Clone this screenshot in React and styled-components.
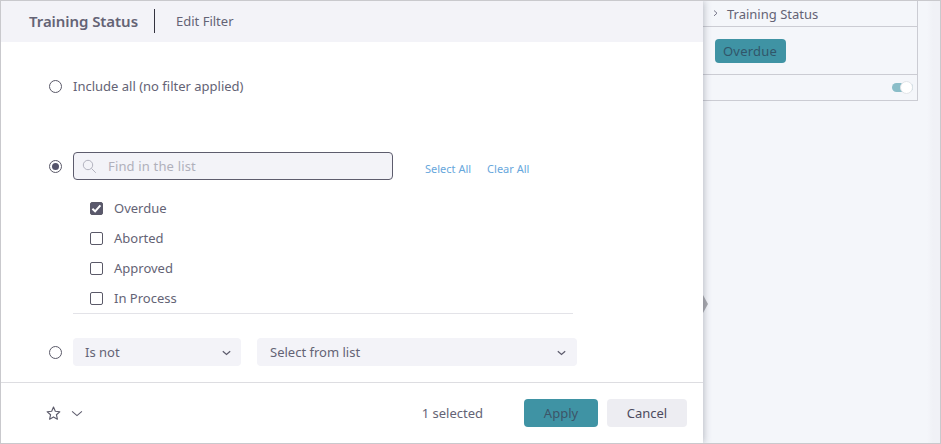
import React from "react";
import styled, { createGlobalStyle } from "styled-components";

const GlobalStyle = createGlobalStyle`
  * { box-sizing: border-box; }
  body { margin: 0; font-family: "Noto Sans", sans-serif; font-size: 13px; color: #646375; }
`;

const Frame = styled.div`
  display: flex;
  width: 941px;
  height: 444px;
  border: 1px solid #c9c9cd;
  overflow: hidden;
  background: #f4f6fa;
`;

const Panel = styled.section`
  position: relative;
  z-index: 1;
  display: flex;
  flex-direction: column;
  width: 702px;
  flex: none;
  background: #fff;
  box-shadow: 1px 0 7px rgba(70, 75, 95, 0.34);
`;

const Header = styled.header`
  display: flex;
  align-items: center;
  height: 41px;
  padding: 0 0 1px 28px;
  background: #f3f3f8;
`;

const Title = styled.h1`
  margin: 0;
  width: 125px;
  font-size: 15px;
  line-height: 20px;
  font-weight: 600;
  letter-spacing: -0.06px;
  white-space: nowrap;
`;

const Subtitle = styled.span`
  display: flex;
  align-items: center;
  height: 24px;
  padding-left: 21px;
  border-left: 1px solid #33323f;
`;

const Body = styled.div`
  flex: 1;
  padding: 34px 0 0 48px;
`;

const Row = styled.div`
  display: flex;
  align-items: center;
  height: ${(p) => p.$height}px;
  margin-top: ${(p) => p.$gap || 0}px;
`;

const Radio = styled.span`
  display: grid;
  place-items: center;
  flex: none;
  width: 13px;
  height: 13px;
  margin-right: 11px;
  border: 1px solid #5a5968;
  border-radius: 50%;
  &::after {
    content: "";
    width: 7px;
    height: 7px;
    border-radius: 50%;
    background: ${(p) => (p.$on ? "#55546a" : "transparent")};
  }
`;

const Search = styled.div`
  display: flex;
  align-items: center;
  gap: 11px;
  width: 320px;
  height: 28px;
  padding-left: 8px;
  border: 1px solid #5d5c6d;
  border-radius: 4px;
  background: #f3f3f8;
  color: #b0b0bb;
  letter-spacing: 0.16px;
`;

const Links = styled.div`
  display: flex;
  gap: 16px;
  margin: 5px 0 0 32px;
  color: #67a7dc;
  font-size: 11px;
  line-height: 16px;
`;

const Options = styled.ul`
  width: 500px;
  height: 121px;
  margin: 13px 0 0 24px;
  padding: 0;
  list-style: none;
  border-bottom: 1px solid #e3e3e8;
`;

const Option = styled.li`
  display: flex;
  align-items: center;
  gap: 11px;
  height: 30px;
  padding-left: 17px;
`;

const Checkbox = styled.span`
  display: grid;
  place-items: center;
  width: 13px;
  height: 13px;
  border: 1px solid #5a5968;
  border-radius: 2px;
  background: ${(p) => (p.$on ? "#5a596c" : "#fff")};
`;

const Select = styled.div`
  display: flex;
  align-items: center;
  justify-content: space-between;
  width: ${(p) => p.$width}px;
  height: 28px;
  margin-right: 16px;
  padding: 0 ${(p) => p.$end}px 0 ${(p) => p.$indent}px;
  border-radius: 4px;
  background: #f3f3f8;
`;

const Footer = styled.footer`
  display: flex;
  align-items: center;
  height: 61px;
  padding: 0 16px 0 45px;
  border-top: 1px solid #dddde1;
`;

const Favorite = styled.div`
  display: flex;
  align-items: center;
  gap: 10px;
`;

const Count = styled.span`
  margin-left: auto;
  margin-right: 41px;
`;

const Button = styled.button`
  width: ${(p) => p.$width}px;
  height: 28px;
  padding: 0;
  border: 0;
  border-radius: 4px;
  background: ${(p) => (p.$primary ? "#3f93a4" : "#ededf2")};
  color: ${(p) => (p.$primary ? "#3d5568" : "#4c4b5e")};
  font: inherit;
  & + & { margin-left: 9px; }
`;

const Sidebar = styled.aside`
  position: relative;
  flex: 1;
  padding-right: 22px;
  background: linear-gradient(to right, #f4f6fa 0 224px, #f0f1f6 230px);
`;

const FilterCard = styled.div`
  width: 215px;
  border-right: 1px solid #cbccd3;
  border-bottom: 1px solid #cbccd3;
`;

const FilterTitle = styled.div`
  display: flex;
  align-items: center;
  gap: 8px;
  height: 26px;
  padding-left: 9px;
  border-bottom: 1px solid #cbccd3;
`;

const FilterValue = styled.div`
  display: flex;
  align-items: center;
  height: 48px;
  padding-left: 12px;
  border-bottom: 1px solid #cbccd3;
`;

const Chip = styled.span`
  width: 71px;
  height: 24px;
  padding-right: 1px;
  border-radius: 4px;
  background: #3f93a4;
  color: #31566a;
  line-height: 24px;
  text-align: center;
  letter-spacing: 0.2px;
`;

const ToggleRow = styled.div`
  display: flex;
  align-items: center;
  justify-content: flex-end;
  height: 25px;
  padding-right: 4px;
`;

const Toggle = styled.span`
  display: flex;
  justify-content: flex-end;
  align-items: center;
  width: 21px;
  height: 9px;
  border-radius: 5px;
  background: #8abdc8;
  &::after {
    content: "";
    flex: none;
    width: 11px;
    height: 11px;
    border: 1px solid #e2e5e9;
    border-radius: 50%;
    background: #fff;
  }
`;

const Handle = styled.svg`
  position: absolute;
  left: 0;
  top: 293px;
`;

const Chevron = ({ width = 9, stroke = 1.4 }) => (
  <svg width={width} height={width} viewBox="0 0 10 10" fill="none" stroke="#5d5c6d" strokeWidth={stroke}>
    <path d="M.9 3.6 5 7.2 9.1 3.6" />
  </svg>
);

const options = ["Overdue", "Aborted", "Approved", "In Process"];

export default function App() {
  return (
    <>
      <GlobalStyle />
      <Frame>
        <Panel>
          <Header>
            <Title>Training Status</Title>
            <Subtitle>Edit Filter</Subtitle>
          </Header>
          <Body>
            <Row $height={20}>
              <Radio />
              Include all (no filter applied)
            </Row>
            <Row $height={28} $gap={56}>
              <Radio $on />
              <Search>
                <svg width="15" height="15" viewBox="0 0 15 15" fill="none" stroke="#b3b3bf">
                  <circle cx="6" cy="6" r="4.7" />
                  <path d="m9.4 9.4 4.4 4.4" />
                </svg>
                Find in the list
              </Search>
              <Links>
                <span>Select All</span>
                <span>Clear All</span>
              </Links>
            </Row>
            <Options>
              {options.map((name, i) => (
                <Option key={name}>
                  <Checkbox $on={i === 0}>
                    {i === 0 && (
                      <svg width="11" height="11" viewBox="0 0 11 11" fill="none" stroke="#fff" strokeWidth="2">
                        <path d="m1.4 5.8 2.7 2.5 5.3-6" />
                      </svg>
                    )}
                  </Checkbox>
                  {name}
                </Option>
              ))}
            </Options>
            <Row $height={28} $gap={24}>
              <Radio />
              <Select $width={168} $indent={12} $end={10}>
                Is not
                <Chevron />
              </Select>
              <Select $width={320} $indent={13} $end={11}>
                Select from list
                <Chevron />
              </Select>
            </Row>
          </Body>
          <Footer>
            <Favorite>
              <svg width="15" height="15" viewBox="0 0 15 15" fill="none" stroke="#5d5c6b" strokeWidth="1.15" strokeLinejoin="round">
                <path d="m7.5 1.1 1.8 4.1 4.5.5-3.4 3 1 4.5-3.9-2.3-3.9 2.3 1-4.5-3.4-3 4.5-.5Z" />
              </svg>
              <Chevron width={12} stroke={0.9} />
            </Favorite>
            <Count>1 selected</Count>
            <Button $primary $width={74}>Apply</Button>
            <Button $width={80}>Cancel</Button>
          </Footer>
        </Panel>
        <Sidebar>
          <FilterCard>
            <FilterTitle>
              <svg width="7" height="8" viewBox="0 0 7 8" fill="none" stroke="#77768a">
                <path d="m2 .5 3 2.7-3 2.7" />
              </svg>
              Training Status
            </FilterTitle>
            <FilterValue>
              <Chip>Overdue</Chip>
            </FilterValue>
            <ToggleRow>
              <Toggle />
            </ToggleRow>
          </FilterCard>
          <Handle width="6" height="20" viewBox="0 0 6 20">
            <path d="M0 1 5 10 0 19Z" fill="#aaabb0" />
          </Handle>
        </Sidebar>
      </Frame>
    </>
  );
}
